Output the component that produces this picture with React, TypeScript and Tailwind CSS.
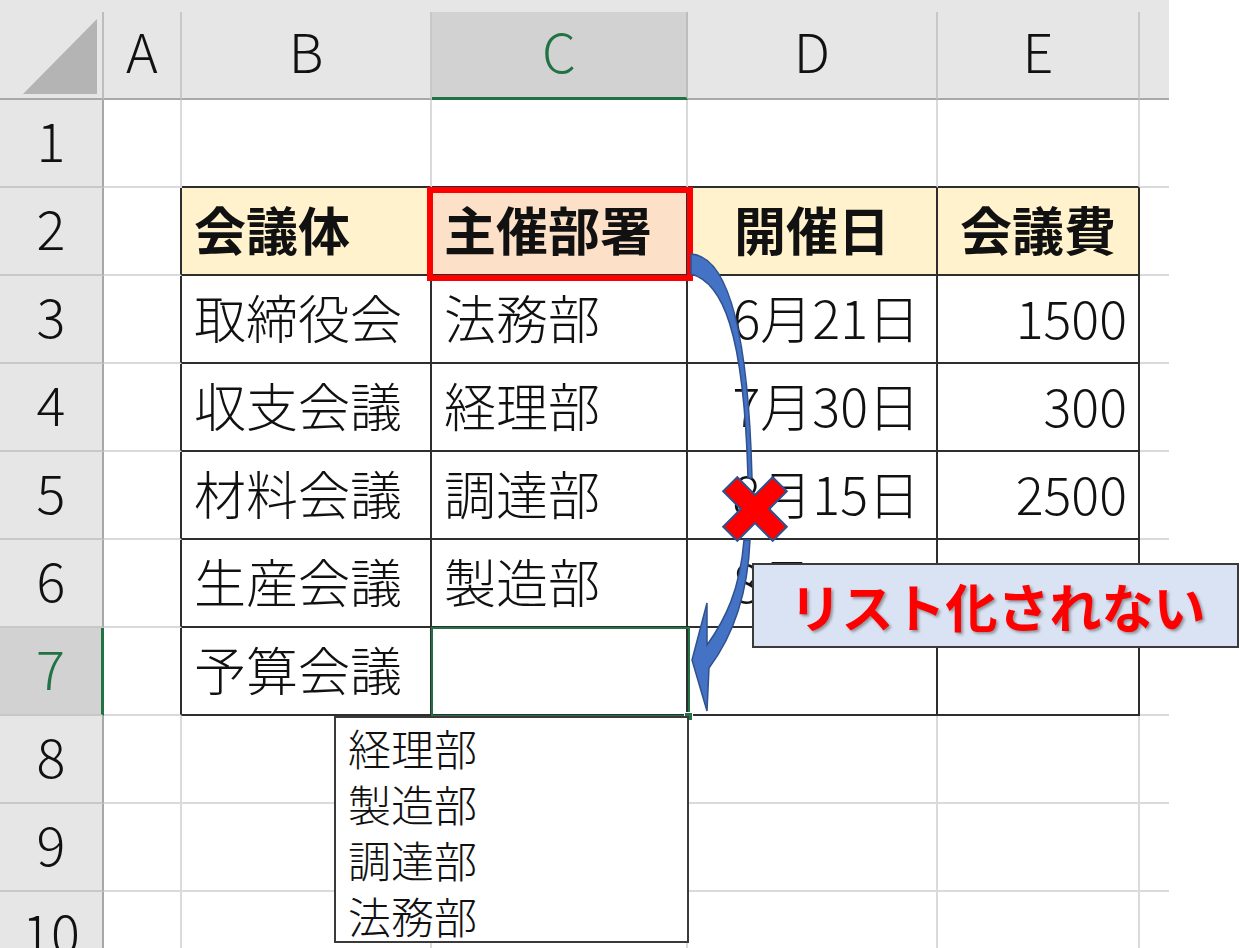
import React from "react";

const cols = ["A", "B", "C", "D", "E", ""];
const data: Record<number, string[]> = {
  2: ["", "会議体", "主催部署", "開催日", "会議費", ""],
  3: ["", "取締役会", "法務部", "6月21日", "1500", ""],
  4: ["", "収支会議", "経理部", "7月30日", "300", ""],
  5: ["", "材料会議", "調達部", "8月15日", "2500", ""],
  6: ["", "生産会議", "製造部", "8月31日", "", ""],
  7: ["", "予算会議", "", "", "", ""],
};

const inTable = (r: number, c: number) => r >= 2 && r <= 7 && c >= 1 && c <= 4;

function Cell({ r, c }: { r: number; c: number }) {
  const rightBlack = inTable(r, c) || inTable(r, c + 1);
  const bottomBlack = inTable(r, c) || inTable(r + 1, c);
  const isLast = c === 5;
  const text = data[r]?.[c] ?? "";
  let bg = "bg-white";
  if (r === 2 && c >= 1 && c <= 4) bg = c === 2 ? "bg-[#fce0c7]" : "bg-[#fff2cc]";
  const bold = r === 2 ? "font-bold" : "font-light";
  let align = "justify-start pl-[12px]";
  if (c === 3) align = r === 2 ? "justify-center" : "justify-end pr-[16px]";
  if (c === 4) align = r === 2 ? "justify-center" : "justify-end pr-[11px]";
  return (
    <div
      className={[
        "flex items-center overflow-hidden whitespace-nowrap text-[52px] leading-none text-[#111] pb-[4px]",
        bg,
        bold,
        align,
        "border-b-2",
        bottomBlack ? "border-b-[#2e2e2e]" : "border-b-[#dadada]",
        isLast ? "" : "border-r-2",
        isLast ? "" : rightBlack ? "border-r-[#2e2e2e]" : "border-r-[#dadada]",
      ].join(" ")}
    >
      {text}
    </div>
  );
}

export default function App() {
  const rowNums = [1, 2, 3, 4, 5, 6, 7, 8, 9, 10];
  return (
    <div className="relative w-[1240px] h-[948px] overflow-hidden bg-white font-['Noto_Sans_CJK_JP','Noto_Sans',sans-serif]">
      <div className="grid w-[1169px] grid-cols-[104px_78px_250px_256px_250px_202px_29px] grid-rows-[100px_repeat(10,88px)]">
        {/* corner */}
        <div className="bg-[#e6e6e6] pt-[12px]">
          <div className="h-full border-r-2 border-r-[#bdbdbd] border-b-2 border-b-[#a8a8a8]">
            <svg width="102" height="86" className="block">
              <polygon points="97,7 97,82 23,82" fill="#b4b4b4" />
            </svg>
          </div>
        </div>
        {cols.map((l, i) => (
          <div key={"h" + i} className="bg-[#e6e6e6] pt-[12px]">
            {i === 2 ? (
              <div className="h-full flex items-center justify-center pb-[10px] bg-[#d2d2d2] border-r-2 border-r-[#bdbdbd] border-b-[3px] border-b-[#217346] text-[54px] font-light leading-none text-[#217346]">
                {l}
              </div>
            ) : (
              <div
                className={
                  "h-full flex items-center justify-center pb-[10px] border-b-2 border-b-[#a8a8a8] text-[54px] font-light leading-none text-[#111] " +
                  (i === 5 ? "" : "border-r-2 border-r-[#c8c8c8]")
                }
              >
                {l}
              </div>
            )}
          </div>
        ))}
        {rowNums.map((r) => (
          <React.Fragment key={"r" + r}>
            {r === 7 ? (
              <div className="flex items-center justify-center pb-[8px] bg-[#d2d2d2] border-r-[3px] border-r-[#217346] border-b-2 border-b-[#c8c8c8] text-[54px] font-light leading-none text-[#217346]">
                {r}
              </div>
            ) : (
              <div className="flex items-center justify-center pb-[8px] bg-[#e6e6e6] border-r-2 border-r-[#a8a8a8] border-b-2 border-b-[#c8c8c8] text-[54px] font-light leading-none text-[#111]">
                {r}
              </div>
            )}
            {[0, 1, 2, 3, 4, 5].map((c) => (
              <Cell key={c} r={r} c={c} />
            ))}
          </React.Fragment>
        ))}
      </div>

      {/* red box on C2 */}
      <div className="absolute left-[427px] top-[187px] w-[266px] h-[94px] border-[6px] border-[#ff0000]" />

      {/* selected cell C7 */}
      <div className="absolute left-[431px] top-[627px] w-[259px] h-[90px] border-2 border-[#217346]" />
      <div className="absolute left-[684px] top-[712px] w-[9px] h-[9px] bg-[#217346] border border-white" />

      {/* dropdown list */}
      <div className="absolute left-[334px] top-[716px] w-[355px] h-[227px] bg-white border-2 border-[#3a3a3a] pl-[12px] pt-[1px] flex flex-col text-[43px] font-light leading-[56px] text-[#111]">
        <div>経理部</div>
        <div>製造部</div>
        <div>調達部</div>
        <div>法務部</div>
      </div>

      {/* arrow + cross */}
      <svg className="absolute left-0 top-0 pointer-events-none" width="1240" height="948">
        <path
          d="M691 254 C 725 256, 748 320, 752 478 L 748 478 C 744 330, 722 282, 691 274 Z"
          fill="#4472c4"
          stroke="#2f528f"
          strokeWidth="1.5"
        />
        <path
          d="M744 540 L 750 540 C 748 590, 736 632, 709 668 L 707 711 L 692 660 L 707 603 L 707 645 C 725 620, 740 590, 744 540 Z"
          fill="#4472c4"
          stroke="#2f528f"
          strokeWidth="1.5"
        />
        <g transform="translate(755 509) rotate(45)">
          <polygon
            points="-10,-35 10,-35 10,-10 35,-10 35,10 10,10 10,35 -10,35 -10,10 -35,10 -35,-10 -10,-10"
            fill="#ff0000"
            stroke="#2f528f"
            strokeWidth="2"
          />
        </g>
      </svg>

      {/* callout */}
      <div className="absolute left-[752px] top-[563px] w-[487px] h-[85px] bg-[#dae3f3] border-2 border-[#3a3a3a] flex items-center justify-center pl-[4px]">
        <span className="text-[52px] font-bold leading-none text-[#ff0000] [text-shadow:2px_2px_3px_rgba(0,0,0,0.35)]">
          リスト化されない
        </span>
      </div>
    </div>
  );
}
